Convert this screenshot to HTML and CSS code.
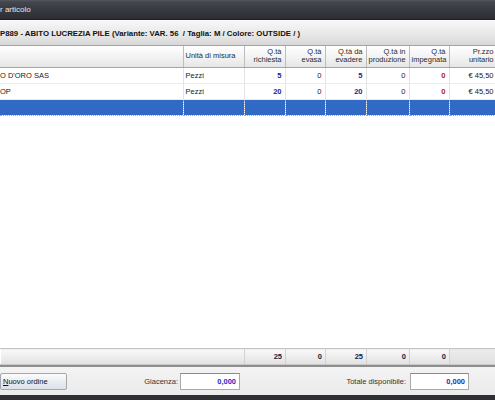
FILE: index.html
```html
<!DOCTYPE html>
<html lang="it">
<head>
<meta charset="utf-8">
<title>Ordini per articolo</title>
<link rel="stylesheet" href="styles.css">
</head>
<body>
<div class="win">
  <div class="titlebar"><span class="ttl">r articolo</span></div>
  <div class="infobar"><span class="info">P889 - ABITO LUCREZIA PILE (Variante: VAR. 56&nbsp; / Taglia: M / Colore: OUTSIDE / )</span></div>
  <div class="grid">
    <table class="tbl">
      <colgroup>
        <col class="c1"><col class="c2"><col class="c3"><col class="c4"><col class="c5"><col class="c6"><col class="c7"><col class="c8">
      </colgroup>
      <thead>
        <tr>
          <th></th>
          <th class="l">Unità di misura</th>
          <th>Q.tà<br>richiesta</th>
          <th>Q.tà<br>evasa</th>
          <th>Q.tà da<br>evadere</th>
          <th>Q.tà in<br>produzione</th>
          <th>Q.tà<br>impegnata</th>
          <th class="lastc">Pr.zzo<br>unitario</th>
        </tr>
      </thead>
      <tbody>
        <tr>
          <td class="cli"><span class="cut">O D'ORO SAS</span></td>
          <td class="l">Pezzi</td>
          <td class="blue">5</td>
          <td>0</td>
          <td class="blue">5</td>
          <td>0</td>
          <td class="red">0</td>
          <td class="lastc">€ 45,50</td>
        </tr>
        <tr>
          <td class="cli"><span class="cut">OP</span></td>
          <td class="l">Pezzi</td>
          <td class="blue">20</td>
          <td>0</td>
          <td class="blue">20</td>
          <td>0</td>
          <td class="red">0</td>
          <td class="lastc">€ 45,50</td>
        </tr>
        <tr class="sel">
          <td></td><td></td><td></td><td></td><td></td><td></td><td></td><td></td>
        </tr>
      </tbody>
    </table>
    <div class="empty"></div>
    <table class="tbl totals">
      <colgroup>
        <col class="c1"><col class="c2"><col class="c3"><col class="c4"><col class="c5"><col class="c6"><col class="c7"><col class="c8">
      </colgroup>
      <tbody>
        <tr>
          <td colspan="2" class="span"></td>
          <td>25</td>
          <td>0</td>
          <td>25</td>
          <td>0</td>
          <td>0</td>
          <td class="last"></td>
        </tr>
      </tbody>
    </table>
  </div>
  <div class="bottom">
    <button class="btn"><u>N</u>uovo ordine</button>
    <label class="lbl lbl1">Giacenza:</label>
    <div class="field f1">0,000</div>
    <label class="lbl lbl2">Totale disponibile:</label>
    <div class="field f2">0,000</div>
  </div>
  <div class="edge"></div>
</div>
</body>
</html>
```

FILE: styles.css
```css
* { box-sizing: border-box; }
html, body { margin: 0; padding: 0; }
body {
  width: 495px;
  height: 400px;
  overflow: hidden;
  background: #2f3035;
  font-family: "Liberation Sans", Arial, sans-serif;
  font-size: 7.5px;
  color: #1a1a1a;
}
.win {
  width: 495px;
  height: 400px;
  display: flex;
  flex-direction: column;
  overflow: hidden;
}
.titlebar {
  height: 20px;
  flex: none;
  background: linear-gradient(#55585f 0, #43464d 2px, #37393f 10px, #2c2e33 19px);
  border-bottom: 1px solid #1e1f22;
  display: flex;
  align-items: center;
  color: #e8e8e8;
  font-size: 8px;
}
.ttl { margin-left: 0; }
.infobar {
  height: 26px;
  flex: none;
  background: linear-gradient(#f7f7f7, #e6e6e6 60%, #d8d8d8);
  border-top: 1px solid #fbfbfb;
  border-bottom: 1px solid #a3a3a3;
  display: flex;
  align-items: center;
  white-space: nowrap;
  overflow: hidden;
}
.info {
  font-weight: bold;
  font-size: 7.8px;
  margin-left: 0;
  color: #111;
}
.grid {
  flex: 1;
  display: flex;
  flex-direction: column;
  background: #fff;
  overflow: hidden;
}
.tbl {
  border-collapse: collapse;
  table-layout: fixed;
  width: 497px;
  flex: none;
}
.c1 { width: 183px; }
.c2 { width: 61px; }
.c3 { width: 41px; }
.c4 { width: 40px; }
.c5 { width: 41px; }
.c6 { width: 43px; }
.c7 { width: 40px; }
.c8 { width: 48px; }
.tbl th {
  height: 21px;
  padding: 0 3px 0 2px;
  font-weight: normal;
  text-align: right;
  line-height: 8px;
  vertical-align: middle;
  background: linear-gradient(#ffffff, #f3f3f3 50%, #e6e6e6);
  border-right: 1px solid #bdbdbd;
  border-bottom: 1px solid #a5a5a5;
  color: #2c2c2c;
  white-space: nowrap;
  overflow: hidden;
}
.tbl th.l { text-align: left; }
.tbl th.lastc, .tbl td.lastc { padding-right: 3px; }
.tbl td {
  height: 16px;
  padding: 0 3px 0 2px;
  text-align: right;
  border-right: 1px solid #e3e3e3;
  border-bottom: 1px solid #ececec;
  white-space: nowrap;
  overflow: hidden;
}
.tbl td.l { text-align: left; }
.tbl td.cli { text-align: left; padding-left: 0; }
.cut { margin-left: 0; }
.blue { color: #1c1c9a; font-weight: bold; }
.red { color: #b01818; font-weight: bold; }
.tbl tr.sel td {
  background: #316ac5;
  border-right: 1px dotted #8fa9dc;
  border-bottom: 1px dotted #8fa9dc;
}
.empty { flex: 1; background: #fff; }
.totals td {
  height: 16px;
  font-weight: bold;
  color: #1a1a3a;
  background: linear-gradient(#f9f9f9, #ededed 50%, #e2e2e2);
  border-top: 1px solid #c4c4c4;
  border-right: 1px solid #d2d2d2;
  border-left: 1px solid #ffffff;
  border-bottom: 1px solid #c8c8c8;
}
.totals td.last { background: linear-gradient(#ececec, #e0e0e0); border-right: none; }
.bottom {
  height: 30px;
  flex: none;
  display: flex;
  align-items: center;
  background: linear-gradient(#f3f3f3, #ebebeb);
  border-top: 2px solid #8e8e8e;
}
.btn {
  height: 17px;
  width: 67px;
  margin-left: 0;
  padding: 0 0 0 2px;
  text-align: left;
  font-family: inherit;
  font-size: 7.5px;
  color: #111;
  background: linear-gradient(#fbfcfd, #e9edf2 50%, #dce2e9);
  border: 1px solid #a4a8ad;
  border-radius: 2px;
}
.lbl { color: #333; text-align: right; white-space: nowrap; }
.lbl1 { width: 34px; margin-left: 77px; }
.lbl2 { width: 62px; margin-left: 104px; }
.field {
  height: 17px;
  background: #fff;
  border: 1px solid #a9a9a9;
  border-top-color: #8a8a8a;
  color: #2a2abf;
  font-weight: bold;
  text-align: right;
  padding-right: 3px;
  line-height: 15px;
}
.f1 { width: 60px; margin-left: 2px; }
.f2 { width: 59px; margin-left: 4px; }
.edge { height: 5px; flex: none; background: #2e2f33; }
```
